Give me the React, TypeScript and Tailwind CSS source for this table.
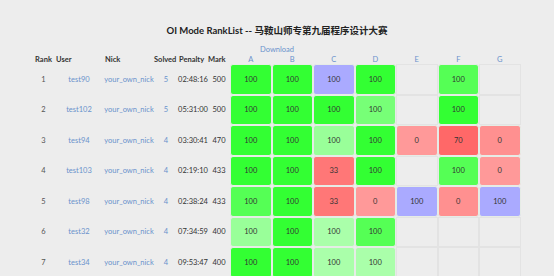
import React from 'react';

type Cell = { v: string; c: string } | null;

type Row = {
  rank: number;
  user: string;
  nick: string;
  solved: number;
  penalty: string;
  mark: number;
  cells: Cell[];
};

const G1 = 'bg-[#33ff33]';
const G2 = 'bg-[#55ff55]';
const G3 = 'bg-[#77ff77]';
const G4 = 'bg-[#99ff99]';
const G5 = 'bg-[#aaffaa]';
const BL = 'bg-[#aaaaff]';
const R0 = 'bg-[#ff9999]';
const R1 = 'bg-[#ff9090]';
const R33 = 'bg-[#ff7777]';
const R70 = 'bg-[#ff6868]';

const rows: Row[] = [
  { rank: 1, user: 'test90', nick: 'your_own_nick', solved: 5, penalty: '02:48:16', mark: 500,
    cells: [{ v: '100', c: G1 }, { v: '100', c: G1 }, { v: '100', c: BL }, { v: '100', c: G1 }, null, { v: '100', c: G2 }, null] },
  { rank: 2, user: 'test102', nick: 'your_own_nick', solved: 5, penalty: '05:31:00', mark: 500,
    cells: [{ v: '100', c: G1 }, { v: '100', c: G1 }, { v: '100', c: G1 }, { v: '100', c: G3 }, null, { v: '100', c: G1 }, null] },
  { rank: 3, user: 'test94', nick: 'your_own_nick', solved: 4, penalty: '03:30:41', mark: 470,
    cells: [{ v: '100', c: G1 }, { v: '100', c: G1 }, { v: '100', c: G4 }, { v: '100', c: G1 }, { v: '0', c: R0 }, { v: '70', c: R70 }, { v: '0', c: R1 }] },
  { rank: 4, user: 'test103', nick: 'your_own_nick', solved: 4, penalty: '02:19:10', mark: 433,
    cells: [{ v: '100', c: G1 }, { v: '100', c: G1 }, { v: '33', c: R33 }, { v: '100', c: G1 }, null, { v: '100', c: G2 }, { v: '0', c: R0 }] },
  { rank: 5, user: 'test98', nick: 'your_own_nick', solved: 4, penalty: '02:38:24', mark: 433,
    cells: [{ v: '100', c: G2 }, { v: '100', c: G1 }, { v: '33', c: R33 }, { v: '0', c: R0 }, { v: '100', c: BL }, { v: '0', c: R1 }, { v: '100', c: BL }] },
  { rank: 6, user: 'test32', nick: 'your_own_nick', solved: 4, penalty: '07:34:59', mark: 400,
    cells: [{ v: '100', c: G4 }, { v: '100', c: G1 }, { v: '100', c: G5 }, { v: '100', c: G2 }, null, null, null] },
  { rank: 7, user: 'test34', nick: 'your_own_nick', solved: 4, penalty: '09:53:47', mark: 400,
    cells: [{ v: '100', c: G1 }, { v: '100', c: G1 }, { v: '100', c: G5 }, { v: '100', c: G5 }, null, null, null] },
];

const problems = ['A', 'B', 'C', 'D', 'E', 'F', 'G'];

const App: React.FC = () => {
  return (
    <div className="min-h-screen bg-[#ededed] text-[#333] text-[7.5px] font-['Lato','Noto_Sans_CJK_SC',sans-serif] overflow-hidden">
      {/* Title */}
      <h2 className="pt-[24px] text-center text-[9.5px] font-bold leading-[14px] text-[#222]">
        OI Mode RankList -- 马鞍山师专第九届程序设计大赛
      </h2>
      <div className="mt-[7px] text-center leading-[10px] text-[#6a92cc]">Download</div>

      {/* Table */}
      <div className="mx-auto w-[488px]">
        {/* Header row */}
        <div className="flex h-[9px] items-center font-bold text-[#333]">
          <div className="w-[21px] text-center">Rank</div>
          <div className="w-[50px] pl-[2px]">User</div>
          <div className="w-[50px] pl-[1px]">Nick</div>
          <div className="w-[24px]">Solved</div>
          <div className="w-[30px] pl-[1px]">Penalty</div>
          <div className="w-[22px]">Mark</div>
          {problems.map((p) => (
            <div key={p} className="w-[41.5px] text-center font-normal text-[#6a92cc]">{p}</div>
          ))}
        </div>

        {/* Body rows */}
        {rows.map((r) => (
          <div key={r.rank} className="flex h-[30.5px] items-stretch">
            <div className="flex w-[21px] items-center justify-center text-[#555]">{r.rank}</div>
            <div className="flex w-[50px] items-center justify-center text-[#6a92cc]">{r.user}</div>
            <div className="flex w-[50px] items-center justify-center text-[#6a92cc]">{r.nick}</div>
            <div className="flex w-[24px] items-center justify-center text-[#6a92cc]">{r.solved}</div>
            <div className="flex w-[30px] items-center justify-center">{r.penalty}</div>
            <div className="flex w-[22px] items-center justify-center">{r.mark}</div>
            {r.cells.map((c, i) =>
              c ? (
                <div
                  key={i}
                  className={`flex w-[41.5px] items-center justify-center rounded-[3px] border border-[#e6ece6] text-[#333] ${c.c}`}
                >
                  {c.v}
                </div>
              ) : (
                <div key={i} className="w-[41.5px] border border-[#e3e3e3]" />
              )
            )}
          </div>
        ))}
      </div>
    </div>
  );
};

export default App;
